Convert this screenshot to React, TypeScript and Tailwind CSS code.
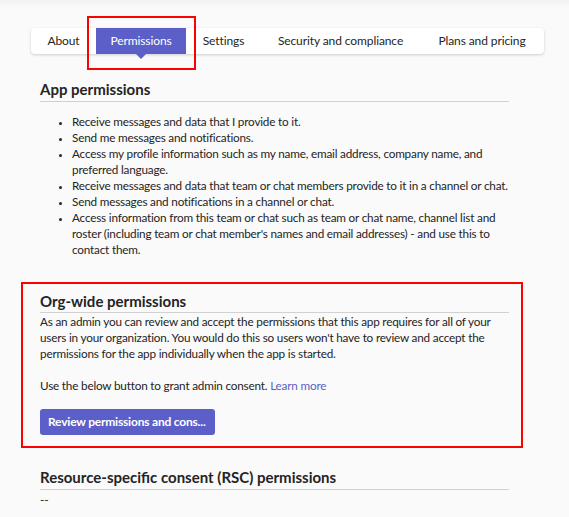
import React from "react";

const tabs = [
  { label: "About", w: "w-[65px]" },
  { label: "Permissions", w: "w-[90px]", active: true },
  { label: "Settings", w: "w-[75px]" },
  { label: "Security and compliance", w: "w-[159px]" },
  { label: "Plans and pricing", w: "w-[124px]" },
];

const appPermissions = [
  "Receive messages and data that I provide to it.",
  "Send me messages and notifications.",
  "Access my profile information such as my name, email address, company name, and preferred language.",
  "Receive messages and data that team or chat members provide to it in a channel or chat.",
  "Send messages and notifications in a channel or chat.",
  "Access information from this team or chat such as team or chat name, channel list and roster (including team or chat member's names and email addresses) - and use this to contact them.",
];

function SectionTitle({ children }: { children: React.ReactNode }) {
  return (
    <h2 className="text-[15px] leading-[20px] font-bold tracking-normal text-[#242424] pb-[2px] border-b border-[#d1d1d1]">
      {children}
    </h2>
  );
}

export default function App() {
  return (
    <div
      className="relative min-h-screen w-full bg-[#fafafa] text-[#242424] overflow-hidden"
      style={{ fontFamily: 'Lato, "Noto Sans", sans-serif' }}
    >
      <div className="h-[8px] bg-gradient-to-b from-[#f2f2f2] to-[#fafafa]" />

      {/* tab bar */}
      <div className="ml-[31px] mt-[20px] w-[513px] h-[26px] flex bg-white rounded-[4px] shadow-[0_1px_3px_rgba(0,0,0,0.18)]">
        {tabs.map((t) => (
          <div
            key={t.label}
            className={`${t.w} relative flex items-center justify-center text-[12px] tracking-[-0.1px] ${
              t.active ? "bg-[#5b5fc7] text-white" : "text-[#242424]"
            }`}
          >
            {t.label}
            {t.active && (
              <span className="absolute left-1/2 -translate-x-1/2 top-full w-0 h-0 border-l-[5px] border-r-[5px] border-t-[5px] border-l-transparent border-r-transparent border-t-[#5b5fc7]" />
            )}
          </div>
        ))}
      </div>

      {/* annotation around active tab */}
      <div className="absolute left-[87px] top-[16px] w-[109px] h-[54px] border-2 border-[#ff0000]" />

      <div className="ml-[40px] w-[469px] mt-[25px] text-[11.75px] leading-[16px] tracking-[-0.2px]">
        <SectionTitle>App permissions</SectionTitle>
        <ul className="mt-[12px] pl-[32px] -mr-[4px] list-disc marker:text-[10px]">
          {appPermissions.map((p) => (
            <li key={p}>{p}</li>
          ))}
        </ul>

        <div className="mt-[24px] -ml-[19px] w-[502px] border-2 border-[#ff0000] pl-[17px] pr-[12px] pt-[7px] pb-[11px]">
          <h2 className="text-[15px] leading-[20px] font-bold tracking-normal pb-[1px] border-b border-[#d1d1d1]">
            Org-wide permissions
          </h2>
          <p className="mt-[1px]">
            As an admin you can review and accept the permissions that this app requires for all of your
            users in your organization. You would do this so users won't have to review and accept the
            permissions for the app individually when the app is started.
          </p>
          <p className="mt-[16px]">
            Use the below button to grant admin consent.{" "}
            <a className="text-[#5b5fc7]">Learn more</a>
          </p>
          <button className="mt-[15px] h-[26px] w-[175px] rounded-[3px] bg-[#5b5fc7] text-white font-bold text-[12px] text-left px-[8px] whitespace-nowrap">
            Review permissions and cons...
          </button>
        </div>

        <div className="mt-[19px]">
          <SectionTitle>Resource-specific consent (RSC) permissions</SectionTitle>
          <div className="mt-[2px]">--</div>
        </div>
      </div>
    </div>
  );
}
